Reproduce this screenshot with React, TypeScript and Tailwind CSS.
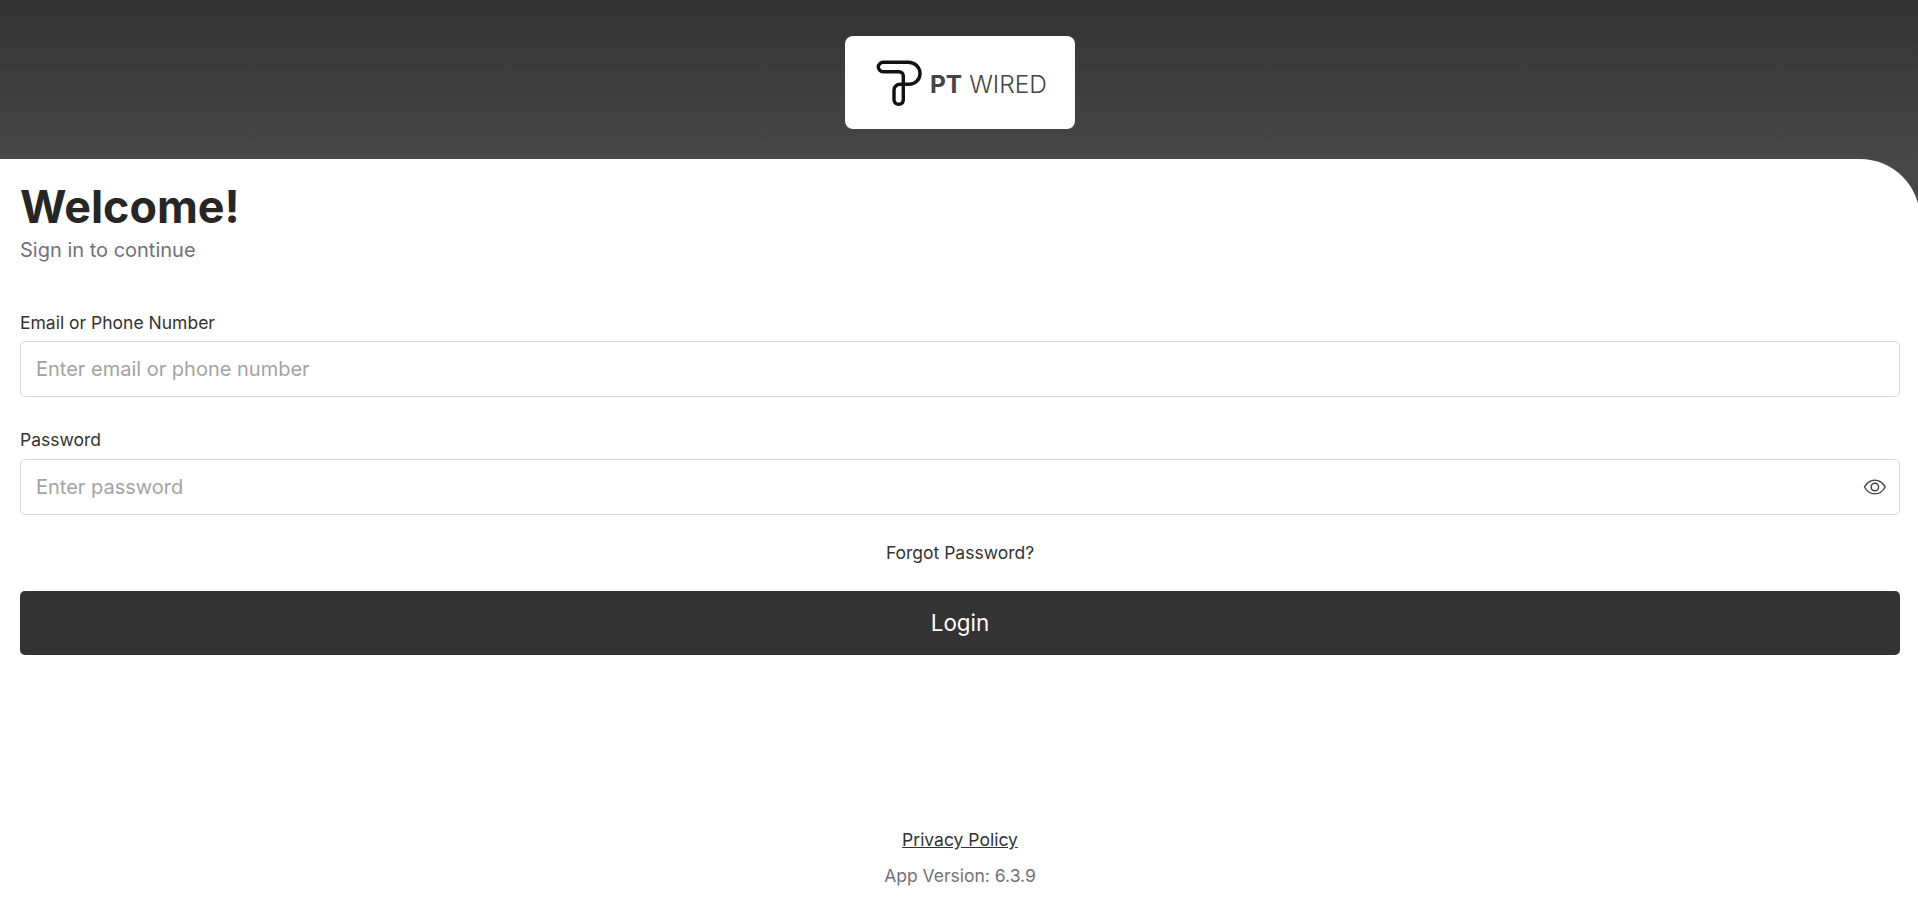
import React from "react";

function Logo() {
  return (
    <svg width="46" height="46" viewBox="0 0 46 46" fill="none" className="shrink-0">
      <path
        d="M7 2.3 H32 C39 2.3 44 7 44 13.5 C44 20 39 24.3 33 24.3 H24 C20.5 24.3 18 27 18 30 V39.5 C18 42.5 20 44.3 22.7 44.3 C25.5 44.3 27.3 42.5 27.3 39.5 V16 C27.3 13.5 25.5 11.7 23 11.7 H7 C4.5 11.7 2.3 9.5 2.3 7 C2.3 4.5 4.5 2.3 7 2.3 Z"
        stroke="#111"
        strokeWidth="3.4"
        strokeLinejoin="round"
      />
    </svg>
  );
}

function Eye() {
  return (
    <svg width="24" height="24" viewBox="0 0 24 24" fill="none" stroke="#404040" strokeWidth="1.4">
      <path d="M1.5 12 C4 7.5 8 5 12 5 C16 5 20 7.5 22.5 12 C20 16.5 16 19 12 19 C8 19 4 16.5 1.5 12 Z" />
      <circle cx="12" cy="12" r="3.8" />
    </svg>
  );
}

export default function App() {
  return (
    <div className="h-[906px] overflow-hidden">
      <div className="flex h-[906px] w-[1920px] flex-col bg-[#474747] font-['Inter',sans-serif]">
        <header className="flex h-[159px] shrink-0 items-start justify-center bg-gradient-to-b from-[#333333] to-[#474747] pt-9">
          <div className="flex h-[93px] w-[230px] items-center gap-[8px] rounded-lg bg-white pl-[31px]">
            <Logo />
            <span className="mt-1 whitespace-nowrap text-[24.5px] text-[#444444]">
              <b className="font-bold">PT</b> <span className="font-light">WIRED</span>
            </span>
          </div>
        </header>
        <main className="flex flex-1 flex-col rounded-tr-[60px] bg-white px-5">
          <h1 className="mt-[20px] text-[44.8px] leading-[56px] font-bold text-[#262626]">Welcome!</h1>
          <p className="mt-[4px] text-xl leading-[22px] text-[#71717a]">Sign in to continue</p>
          <label className="mt-[51px] mb-[7px] text-[17.5px] leading-[22px] text-[#333333]">Email or Phone Number</label>
          <div className="flex h-[56px] items-center rounded-[5px] border border-[#d4d4d4] px-[15px]">
            <input
              placeholder="Enter email or phone number"
              className="w-full text-xl outline-none placeholder:text-[#a3a3a3]"
            />
          </div>
          <label className="mt-[32px] mb-[8px] text-[17.5px] leading-[22px] text-[#333333]">Password</label>
          <div className="flex h-[56px] items-center rounded-[5px] border border-[#d4d4d4] pr-[12px] pl-[15px]">
            <input placeholder="Enter password" className="w-full text-xl outline-none placeholder:text-[#a3a3a3]" />
            <Eye />
          </div>
          <a className="mt-[27px] text-center text-[17.5px] leading-[22px] text-[#333333]">Forgot Password?</a>
          <button className="mt-[27px] h-[64px] rounded-[5px] bg-[#333333] text-[22.4px] font-normal text-white">Login</button>
          <div className="mt-auto flex flex-col items-center pb-[18px]">
            <a className="text-[17.5px] leading-[24px] text-[#333333] underline">Privacy Policy</a>
            <p className="mt-3 text-[17.5px] leading-[24px] text-[#71717a]">App Version: 6.3.9</p>
          </div>
        </main>
      </div>
    </div>
  );
}
